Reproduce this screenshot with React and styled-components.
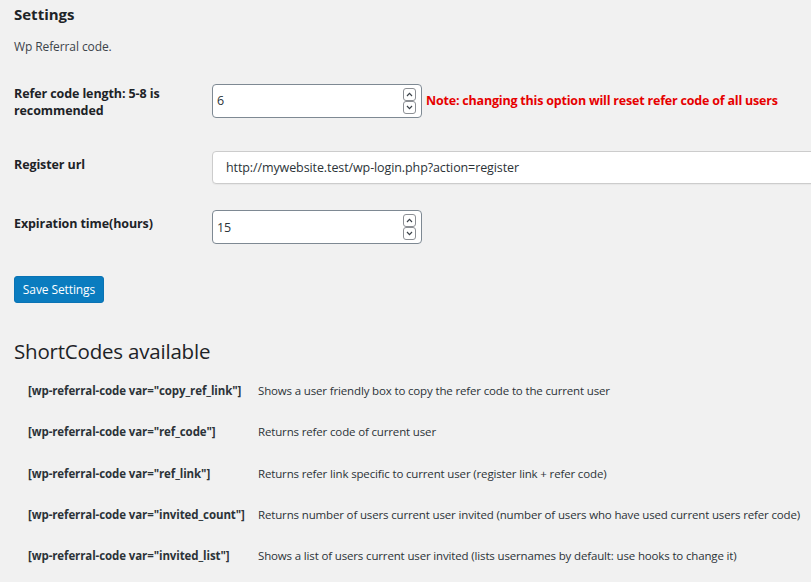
import React from "react";
import styled, { createGlobalStyle } from "styled-components";

const Global = createGlobalStyle`
  html, body { margin: 0; padding: 0; }
  body {
    background: #f1f1f1;
    color: #1d2327;
    font-family: "Open Sans", "Noto Sans", sans-serif;
    font-size: 13px;
    width: 811px;
    overflow: hidden;
  }
`;

const Page = styled.div`
  padding: 0 0 0 14px;
  width: 797px;
  overflow: hidden;
`;

const Title = styled.h2`
  margin: 4px 0 0;
  font-size: 15px;
  font-weight: 700;
  line-height: 20px;
  color: #1d2327;
`;

const Intro = styled.p`
  margin: 14px 0 0;
  font-size: 12px;
  line-height: 18px;
  color: #3c434a;
  letter-spacing: -0.1px;
`;

const Form = styled.div`
  display: grid;
  grid-template-columns: 198px 1fr;
  margin-top: 26px;
`;

const Label = styled.div`
  font-size: 12.5px;
  font-weight: 700;
  line-height: 17px;
  padding-top: ${(p) => (p.$gap || 0) + (p.$pt || 0)}px;
  letter-spacing: -0.1px;
  color: #1d2327;
`;

const Cell = styled.div`
  display: flex;
  align-items: center;
  gap: 4px;
  min-width: 0;
  padding-top: ${(p) => p.$gap || 0}px;
`;

const Field = styled.div`
  display: flex;
  align-items: center;
  box-sizing: border-box;
  width: ${(p) => p.$w}px;
  flex: none;
  height: ${(p) => p.$h || 34}px;
  background: #fff;
  border: 1px solid ${(p) => (p.$light ? "#ccc" : "#7e8993")};
  border-radius: 4px;
  padding: 0 5px 0 ${(p) => p.$pl || 4}px;
  box-shadow: ${(p) => (p.$light ? "0 1px 1px rgba(0,0,0,0.04)" : "none")};
`;

const Value = styled.span`
  flex: 1;
  font-size: 12.5px;
  color: #2c3338;
  white-space: nowrap;
  letter-spacing: -0.1px;
`;

const Spinner = styled.div`
  display: flex;
  flex-direction: column;
`;

const SpinBtn = styled.div`
  width: 11px;
  height: 11px;
  border: 1px solid #8c8f94;
  border-radius: 3px;
  display: flex;
  align-items: center;
  justify-content: center;
  background: #fff;
`;

const Note = styled.span`
  color: #e60000;
  font-weight: 700;
  font-size: 12.5px;
  letter-spacing: -0.2px;
  white-space: nowrap;
`;

const Button = styled.button`
  margin-top: 32px;
  background: #0a7cbf;
  color: #fff;
  border: 1px solid #0a73b4;
  border-radius: 3px;
  height: 27px;
  width: 90px;
  padding: 0;
  font-family: inherit;
  font-size: 12px;
  letter-spacing: -0.1px;
  display: block;
`;

const SubTitle = styled.h2`
  margin: 34px 0 0;
  font-size: 20.5px;
  font-weight: 400;
  line-height: 28px;
  color: #1d2327;
  letter-spacing: -0.2px;
`;

const Codes = styled.div`
  display: grid;
  grid-template-columns: 230px 1fr;
  grid-auto-rows: 41.3px;
  align-items: center;
  margin-top: 5px;
  padding-left: 14px;
`;

const Code = styled.div`
  font-weight: 700;
  font-size: 11.5px;
  letter-spacing: -0.1px;
  color: #2c3338;
  white-space: nowrap;
`;

const Desc = styled.div`
  font-size: 11.5px;
  letter-spacing: -0.15px;
  color: #2c3338;
  white-space: nowrap;
`;

const Chevron = ({ up }) => (
  <svg width="7" height="5" viewBox="0 0 7 5">
    <path
      d={up ? "M1 4 L3.5 1.3 L6 4" : "M1 1 L3.5 3.7 L6 1"}
      fill="none"
      stroke="#3c434a"
      strokeWidth="1.2"
    />
  </svg>
);

const NumberField = ({ value }) => (
  <Field $w={210}>
    <Value>{value}</Value>
    <Spinner>
      <SpinBtn>
        <Chevron up />
      </SpinBtn>
      <SpinBtn>
        <Chevron />
      </SpinBtn>
    </Spinner>
  </Field>
);

const codes = [
  ['[wp-referral-code var="copy_ref_link"]', "Shows a user friendly box to copy the refer code to the current user"],
  ['[wp-referral-code var="ref_code"]', "Returns refer code of current user"],
  ['[wp-referral-code var="ref_link"]', "Returns refer link specific to current user (register link + refer code)"],
  ['[wp-referral-code var="invited_count"]', "Returns number of users current user invited (number of users who have used current users refer code)"],
  ['[wp-referral-code var="invited_list"]', "Shows a list of users current user invited (lists usernames by default: use hooks to change it)"],
];

export default function App() {
  return (
    <>
      <Global />
      <Page>
        <Title>Settings</Title>
        <Intro>Wp Referral code.</Intro>
        <Form>
          <Label $pt={3}>
            Refer code length: 5-8 is
            <br />
            recommended
          </Label>
          <Cell>
            <NumberField value="6" />
            <Note>Note: changing this option will reset refer code of all users</Note>
          </Cell>
          <Label $gap={32} $pt={5}>Register url</Label>
          <Cell $gap={32}>
            <Field $w={640} $h={33} $pl={13} $light>
              <Value>http://mywebsite.test/wp-login.php?action=register</Value>
            </Field>
          </Cell>
          <Label $gap={26} $pt={5}>Expiration time(hours)</Label>
          <Cell $gap={26}>
            <NumberField value="15" />
          </Cell>
        </Form>
        <Button>Save Settings</Button>
        <SubTitle>ShortCodes available</SubTitle>
        <Codes>
          {codes.map(([c, d]) => (
            <React.Fragment key={c}>
              <Code>{c}</Code>
              <Desc>{d}</Desc>
            </React.Fragment>
          ))}
        </Codes>
      </Page>
    </>
  );
}
